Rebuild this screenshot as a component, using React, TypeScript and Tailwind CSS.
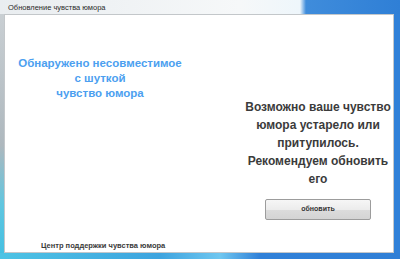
const font = { fontFamily: '"Liberation Sans", Arial, sans-serif' };

export default function App() {
  return (
    <div className="flex h-[259px] w-[400px] flex-col bg-[#2f80d8]" style={font}>
      {/* title bar */}
      <div className="flex h-[14px] items-center bg-[linear-gradient(90deg,#e9edf0_0%,#f6f8f9_60%,#eef6fb_75%,#3f8cdb_76.5%,#2f7fd6_100%)] pl-[8px] pt-[2px]">
        <span className="text-[7.5px] leading-none text-[#2a2a2a]">Обновление чувства юмора</span>
      </div>
      <div className="flex flex-1">
        <div className="w-[4px] bg-[linear-gradient(180deg,#c9cfd3_0%,#aeb8be_55%,#5fc6e0_80%,#45c0e2_100%)]" />
        <div className="flex flex-1 flex-col border border-[#c3c7ca] bg-white">
          <div className="flex flex-1">
            <div className="w-[190px] pt-[41px] text-center text-[11.5px] font-bold leading-[15px] text-[#4c9ff0]">
              Обнаружено несовместимое
              <br />с шуткой
              <br />
              чувство юмора
            </div>
            <div className="flex flex-1 flex-col items-center pl-[48px] pt-[83px]">
              <p className="text-center text-[12px] font-bold leading-[18px] text-[#3b3b3b]">
                Возможно ваше чувство
                <br />
                юмора устарело или
                <br />
                притупилось.
                <br />
                Рекомендуем обновить
                <br />
                его
              </p>
              <button className="mt-[11px] h-[21px] w-[106px] rounded-[2px] border border-[#9c9c9c] bg-[linear-gradient(180deg,#f6f6f6_0%,#ececec_50%,#dcdcdc_51%,#d4d4d4_100%)] text-[7px] font-bold text-[#333]">
                обновить
              </button>
            </div>
          </div>
          <div className="pb-[3px] pl-[36px] text-[7.5px] font-bold leading-none text-[#3a3a3a]">
            Центр поддержки чувства юмора
          </div>
        </div>
        <div className="w-[6px]" />
      </div>
      <div className="h-[6px] bg-[linear-gradient(90deg,#4cc3e4_0%,#3ea4df_40%,#6fc7f0_55%,#2f80d8_65%,#2f7fd6_100%)]" />
    </div>
  );
}
